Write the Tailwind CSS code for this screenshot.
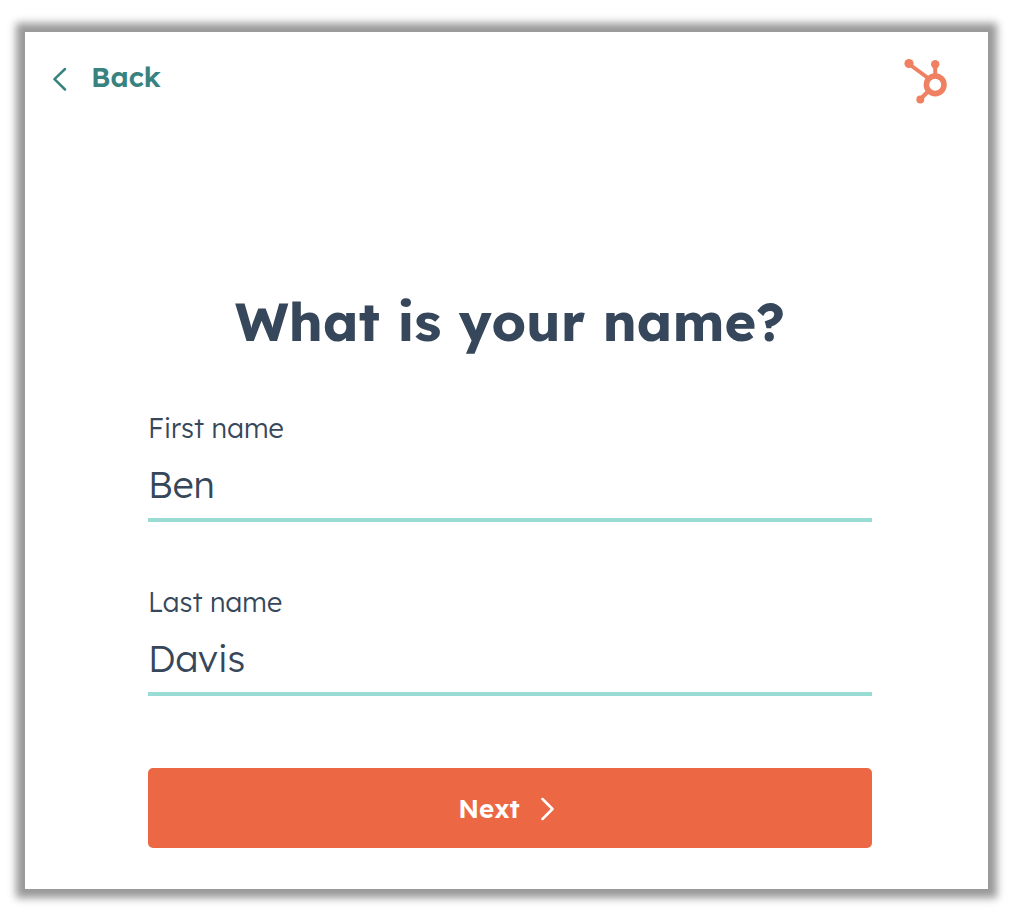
<!DOCTYPE html>
<html lang="en">
  <head>
    <meta charset="UTF-8" />
    <meta name="viewport" content="width=device-width, initial-scale=1.0" />
    <title>What is your name?</title>
    <script src="https://cdn.jsdelivr.net/npm/@tailwindcss/browser@4"></script>
  </head>
  <body class="bg-white font-['Lexend_Deca','Inter',sans-serif] text-[#37475b]">
    <div class="pt-8 pb-[35px] pl-[25px] pr-[34px]">
      <main
        class="bg-white shadow-[0_0_8px_9px_#999999] pb-[41px]"
      >
        <header class="flex items-start justify-between pt-[26px] pl-7 pr-9">
          <a
            href="#"
            class="flex items-center gap-6 h-[38px] text-[28px] leading-[38px] font-semibold text-[#38827f]"
          >
            <svg class="w-[14px] h-6 mt-1" viewBox="0 0 14 24" fill="none">
              <path
                d="M12 2 1.5 12.2 12 22.5"
                stroke="currentColor"
                stroke-width="2.5"
                stroke-linecap="round"
                stroke-linejoin="round"
              />
            </svg>
            Back
          </a>

          <svg
            class="w-12 h-12 text-[#ef8162]"
            viewBox="0 0 48 48"
            fill="none"
            stroke="currentColor"
            role="img"
            aria-label="HubSpot"
          >
            <path d="M5 6 24 20M31.2 7v12M16 41.5l8-8" stroke-width="4" />
            <circle cx="31.2" cy="26.8" r="8.8" stroke-width="5.6" />
            <circle cx="5" cy="5.5" r="4.6" fill="currentColor" stroke="none" />
            <circle cx="31.2" cy="6.2" r="4.2" fill="currentColor" stroke="none" />
            <circle cx="16.3" cy="41.4" r="4" fill="currentColor" stroke="none" />
          </svg>
        </header>

        <form class="flex flex-col pt-[183px] pl-[123px] pr-[116px]">
          <h1 class="text-center text-[54px] leading-16 font-bold">
            What is your name?
          </h1>

          <label for="first_name" class="mt-[57px] text-[27px] leading-9 font-light">
            First name
          </label>
          <input
            id="first_name"
            value="Ben"
            class="mt-2 h-[68px] pb-1 border-b-4 border-[#99dcd3] text-[37px] font-light outline-none"
          />

          <label for="last_name" class="mt-[62px] text-[27px] leading-9 font-light">
            Last name
          </label>
          <input
            id="last_name"
            value="Davis"
            class="mt-2 h-[68px] pb-1 border-b-4 border-[#99dcd3] text-[37px] font-light outline-none"
          />

          <button
            type="button"
            class="mt-[72px] flex h-20 items-center justify-center gap-5 rounded-[5px] bg-[#ec6845] pr-2 text-[26px] font-semibold text-white"
          >
            Next
            <svg class="w-[14px] h-6 mt-0.5" viewBox="0 0 14 24" fill="none">
              <path
                d="M2.5 2 12.5 12 2.5 22"
                stroke="currentColor"
                stroke-width="2.5"
                stroke-linecap="round"
                stroke-linejoin="round"
              />
            </svg>
          </button>
        </form>
      </main>
    </div>
  </body>
</html>
